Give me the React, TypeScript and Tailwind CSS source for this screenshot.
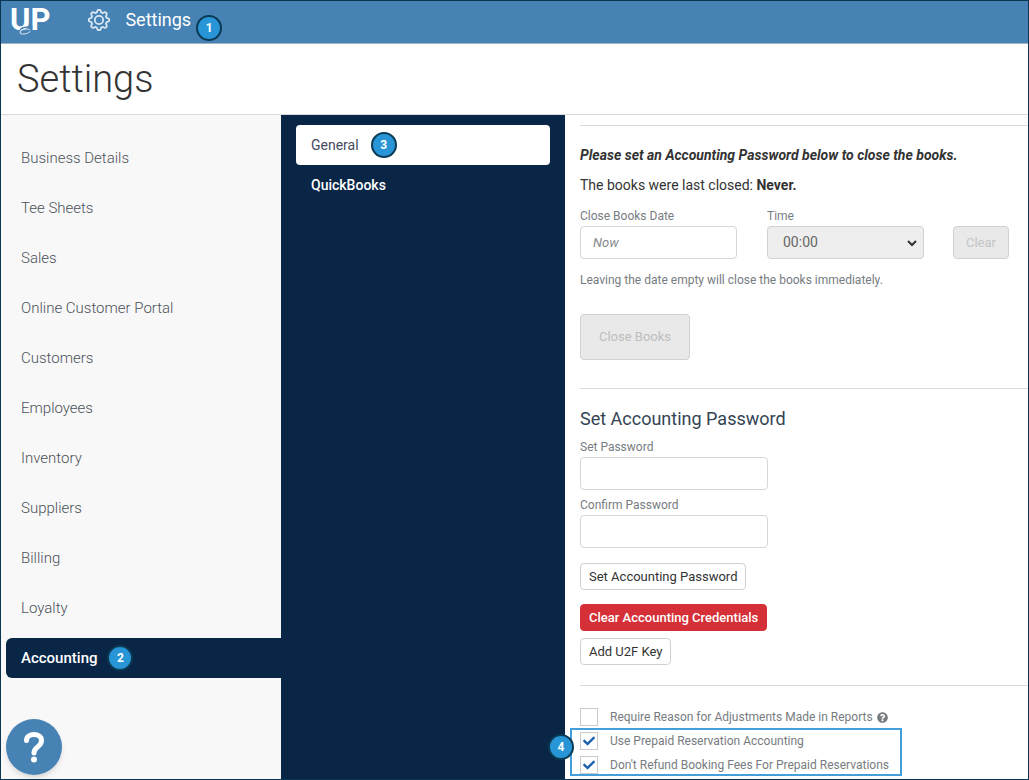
import * as React from "react";
import {FaCheck, FaQuestionCircle} from "react-icons/fa";

const sections = [
  "Business Details",
  "Tee Sheets",
  "Sales",
  "Online Customer Portal",
  "Customers",
  "Employees",
  "Inventory",
  "Suppliers",
  "Billing",
  "Loyalty",
];

const button = "rounded border text-[13px] leading-4";
const field = "block h-[33px] w-full rounded border border-[#d4d6d8] bg-white px-3 text-[13px]";
const label = "mb-[2px] block text-[12px] leading-4 text-[#777c81]";

function Badge({children, className = ""}: {children: React.ReactNode; className?: string}) {
  return (
    <span
      className={`flex size-[26px] shrink-0 items-center justify-center rounded-full border-2 border-[#0b3a55] bg-[#2795d6] text-[12px] leading-none font-bold text-white ${className}`}
    >
      {children}
    </span>
  );
}

function Logo() {
  return (
    <span className="relative block text-[31px] leading-10 font-bold">
      UP
      <svg
        className="absolute bottom-[5px] left-2 h-[10px] w-5"
        fill="none"
        strokeLinecap="round"
        viewBox="0 0 20 10"
      >
        <path d="M2 6c1-4 6-4 12-4" stroke="#4682b4" strokeWidth="1.5" />
        <ellipse cx="7" cy="6.500" rx="5" ry="2.200" stroke="#d5e4f0" transform="rotate(-12 7 6.500)" />
        <path d="M5 7.500c4 0 7-2 9-4" stroke="#4682b4" strokeWidth="1.2" />
      </svg>
    </span>
  );
}

// eight soft teeth round a ring
const gearPath =
  Array.from({length: 96}, (_, i) => {
    const angle = (i / 96) * Math.PI * 2;
    const wave = Math.max(-0.7, Math.min(0.7, Math.cos(angle * 8)));
    const radius = 9 + wave * 1.7;
    const x = (12 + radius * Math.sin(angle)).toFixed(2);
    const y = (12 - radius * Math.cos(angle)).toFixed(2);

    return `${i ? "L" : "M"}${x} ${y}`;
  }).join("") + "Z";

function Gear() {
  return (
    <svg
      className="ml-[37px] size-6"
      fill="none"
      stroke="#dbe8f3"
      strokeLinejoin="round"
      strokeWidth="1.8"
      viewBox="0 0 24 24"
    >
      <path d={gearPath} />
      <circle cx="12" cy="12" r="4.2" />
    </svg>
  );
}

function Check({
  children,
  defaultChecked,
  id,
}: {
  children: React.ReactNode;
  defaultChecked?: boolean;
  id: string;
}) {
  return (
    <div className="flex h-6 items-center">
      <span className="relative size-[18px]">
        <input
          className="peer block size-[18px] appearance-none border border-[#c9cbcd] bg-white"
          defaultChecked={defaultChecked}
          id={id}
          type="checkbox"
        />
        <FaCheck className="pointer-events-none absolute inset-0 m-auto hidden size-3 text-[#1f64b4] peer-checked:block" />
      </span>
      <label className="ml-3 flex items-center gap-1 text-[12px] leading-4 text-[#777c81]" htmlFor={id}>
        {children}
      </label>
    </div>
  );
}

export default function App() {
  return (
    <div className="flex min-h-screen flex-col border border-[#0b3550] bg-white font-[Roboto,sans-serif] text-[#333]">
      <header className="flex h-[43px] items-center border-b border-[#a3b3c0] bg-[#4682b4] pb-[5px] pl-[9px] text-white">
        <Logo />
        <Gear />
        <span className="ml-[14px] text-[18px] leading-6">Settings</span>
        <Badge className="mt-4 ml-[5px]">1</Badge>
      </header>
      <div className="border-b border-[#d8dadc] px-4 pt-[11px] pb-[11px]">
        <h1 className="text-[38px] leading-[48px] font-light">Settings</h1>
      </div>

      <div className="flex flex-1">
        <nav className="flex w-[280px] shrink-0 flex-col gap-[10px] bg-[#f8f8f9] pt-[23px] pl-[5px]">
          {sections.map((name) => (
            <a
              key={name}
              className="flex h-10 items-center pl-[15px] text-[15px] font-light text-[#4b5258]"
              href="#"
            >
              {name}
            </a>
          ))}
          <a
            className="flex h-10 items-center gap-[10px] rounded-l-md bg-[#092647] pl-[15px] text-[15px] font-medium text-white"
            href="#"
          >
            Accounting
            <Badge>2</Badge>
          </a>
          <button
            aria-label="Help"
            className="mt-auto mb-1 flex size-14 items-center justify-center rounded-full bg-[#4682b4] shadow-md"
            type="button"
          >
            <svg className="h-8 w-6" fill="none" viewBox="0 0 24 32">
              <path
                d="M4.500 9.500C4.500 5.500 8 3.500 12 3.500s7.500 2 7.500 6c0 3.500-2 5-4.200 6.700C13.200 17.700 12 19 12 22"
                stroke="white"
                strokeLinecap="round"
                strokeLinejoin="round"
                strokeWidth="5"
              />
              <circle cx="12" cy="28.500" fill="white" r="3" />
            </svg>
          </button>
        </nav>

        <nav className="w-[284px] shrink-0 bg-[#092647] px-[15px] pt-[10px] text-[14px]">
          <a className="flex h-10 items-center gap-3 rounded bg-white pl-[15px] text-[#454a60]" href="#">
            General
            <Badge>3</Badge>
          </a>
          <a className="flex h-10 items-center pl-[15px] font-medium text-white" href="#">
            QuickBooks
          </a>
        </nav>

        <main className="min-w-0 flex-1 pt-[10px] pl-[15px]">
          <section className="border-t border-[#d8dadc] pt-[19px]">
            <p className="text-[14px] leading-5 font-bold italic">
              Please set an Accounting Password below to close the books.
            </p>
            <p className="mt-[10px] text-[14px] leading-5">
              The books were last closed: <b>Never.</b>
            </p>
            <div className="mt-[13px] flex items-end">
              <div className="w-[157px]">
                <label className={label} htmlFor="date">
                  Close Books Date
                </label>
                <input
                  className={`${field} placeholder:text-[#85898d] placeholder:italic`}
                  id="date"
                  placeholder="Now"
                  type="text"
                />
              </div>
              <div className="relative ml-[30px] w-[157px]">
                <label className={label} htmlFor="time">
                  Time
                </label>
                <select
                  className="block h-[33px] w-full appearance-none rounded border border-[#cfd1d3] bg-[#eee] px-[15px] text-[14px] text-[#666]"
                  id="time"
                >
                  <option>00:00</option>
                </select>
                <svg
                  className="pointer-events-none absolute right-[7px] bottom-3 h-2 w-[10px]"
                  fill="none"
                  stroke="#333"
                  strokeWidth="2"
                  viewBox="0 0 10 8"
                >
                  <path d="M1 2l4 4 4-4" />
                </svg>
              </div>
              <button
                disabled
                className={`${button} ml-[29px] h-[33px] w-14 border-[#cfd1d3] bg-[#e9e9e9] text-[#c3c5c7]`}
                type="button"
              >
                Clear
              </button>
            </div>
            <p className="mt-[13px] text-[12px] leading-4 text-[#777c81]">
              Leaving the date empty will close the books immediately.
            </p>
            <button
              disabled
              className={`${button} mt-[26px] h-[46px] w-[110px] border-[#cfd1d3] bg-[#e9e9e9] text-[#bcbec0]`}
              type="button"
            >
              Close Books
            </button>
          </section>

          <section className="mt-7 border-t border-[#d8dadc] pt-[18px]">
            <h2 className="text-[18px] leading-6 text-[#344454]">Set Accounting Password</h2>
            <div className="mt-2 flex w-[188px] flex-col gap-[7px]">
              <div>
                <label className={label} htmlFor="password">
                  Set Password
                </label>
                <input className={field} id="password" type="password" />
              </div>
              <div>
                <label className={label} htmlFor="confirm">
                  Confirm Password
                </label>
                <input className={field} id="confirm" type="password" />
              </div>
            </div>
            <div className="mt-[15px] flex flex-col items-start">
              <button className={`${button} h-[27px] border-[#ced2d6] px-2`} type="button">
                Set Accounting Password
              </button>
              <button
                className={`${button} mt-[14px] h-[27px] border-[#d52f37] bg-[#d52f37] px-2 font-medium text-white`}
                type="button"
              >
                Clear Accounting Credentials
              </button>
              <button className={`${button} mt-[7px] h-[27px] border-[#ced2d6] px-2`} type="button">
                Add U2F Key
              </button>
            </div>
          </section>

          <section className="mt-5 border-t border-[#d8dadc] pt-[19px]">
            <Check id="reason">
              Require Reason for Adjustments Made in Reports
              <FaQuestionCircle className="size-[11px]" />
            </Check>
            <div className="relative">
              <Check defaultChecked id="prepaid">
                Use Prepaid Reservation Accounting
              </Check>
              <Check defaultChecked id="refund">
                Don't Refund Booking Fees For Prepaid Reservations
              </Check>
              <div className="pointer-events-none absolute -top-px -left-[10px] h-12 w-[332px] border-2 border-[#459fdb]" />
              <Badge className="absolute top-[5px] -left-8">4</Badge>
            </div>
          </section>
        </main>
      </div>
    </div>
  );
}
